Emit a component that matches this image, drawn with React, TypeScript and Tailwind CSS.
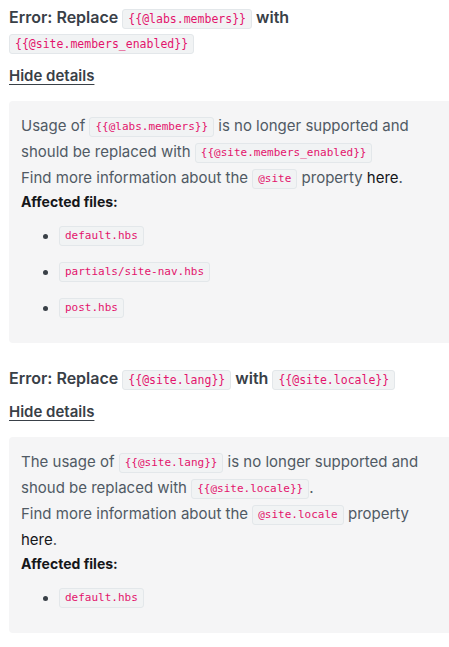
import React from "react";

function Code({ children, small }: { children: React.ReactNode; small?: boolean }) {
  return (
    <code
      className={
        "inline-block align-middle rounded-[3px] border border-[#e3e7ea] bg-[#f1f3f4] px-[5px] py-[2px] leading-[14px] font-normal text-[#e3136c] [font-family:'DejaVu_Sans_Mono',monospace] " +
        (small ? "text-[11px]" : "text-[11.5px]")
      }
    >
      {children}
    </code>
  );
}

function Files({ files }: { files: string[] }) {
  return (
    <ul className="mt-[14px] flex flex-col gap-[16px] pl-[22px]">
      {files.map((f) => (
        <li key={f} className="flex items-center gap-[11px]">
          <span className="h-[5px] w-[5px] rounded-full bg-[#394047]" />
          <Code small>{f}</Code>
        </li>
      ))}
    </ul>
  );
}

function Section({
  title,
  body,
  files,
}: {
  title: React.ReactNode;
  body: React.ReactNode;
  files: string[];
}) {
  return (
    <div>
      <h3 className="text-[16px] leading-[25px] font-semibold text-[#394047]">{title}</h3>
      <div className="mt-[11px] text-[15px] leading-[20px] font-semibold text-[#394047] underline underline-offset-[3px]">
        Hide details
      </div>
      <div className="mt-[15px] rounded-l-[4px] bg-[#f5f5f6] pl-[12px] pr-[12px] pt-[12px] pb-[25px]">
        <p className="text-[15px] leading-[26px] text-[#505a64]">{body}</p>
        <div className="mt-[1px] text-[14px] leading-[20px] font-bold text-[#15171a]">Affected files:</div>
        <Files files={files} />
      </div>
    </div>
  );
}

export default function App() {
  return (
    <div className="bg-white pl-[9px] pt-[5px] [font-family:Inter,'Noto_Sans',sans-serif]">
      <Section
        title={
          <>
            Error: Replace <Code>{"{{@labs.members}}"}</Code> with <Code>{"{{@site.members_enabled}}"}</Code>
          </>
        }
        body={
          <>
            Usage of <Code small>{"{{@labs.members}}"}</Code> is no longer supported and should be replaced with{" "}
            <Code small>{"{{@site.members_enabled}}"}</Code>
            <br />
            Find more information about the <Code small>@site</Code> property{" "}
            <span className="text-[#15171a]">here</span>.
          </>
        }
        files={["default.hbs", "partials/site-nav.hbs", "post.hbs"]}
      />
      <div className="h-[23px]" />
      <Section
        title={
          <>
            Error: Replace <Code>{"{{@site.lang}}"}</Code> with <Code>{"{{@site.locale}}"}</Code>
          </>
        }
        body={
          <>
            The usage of <Code small>{"{{@site.lang}}"}</Code> is no longer supported and shoud be replaced with{" "}
            <Code small>{"{{@site.locale}}"}</Code>.
            <br />
            Find more information about the <Code small>@site.locale</Code> property{" "}
            <span className="text-[#15171a]">here</span>.
          </>
        }
        files={["default.hbs"]}
      />
    </div>
  );
}
